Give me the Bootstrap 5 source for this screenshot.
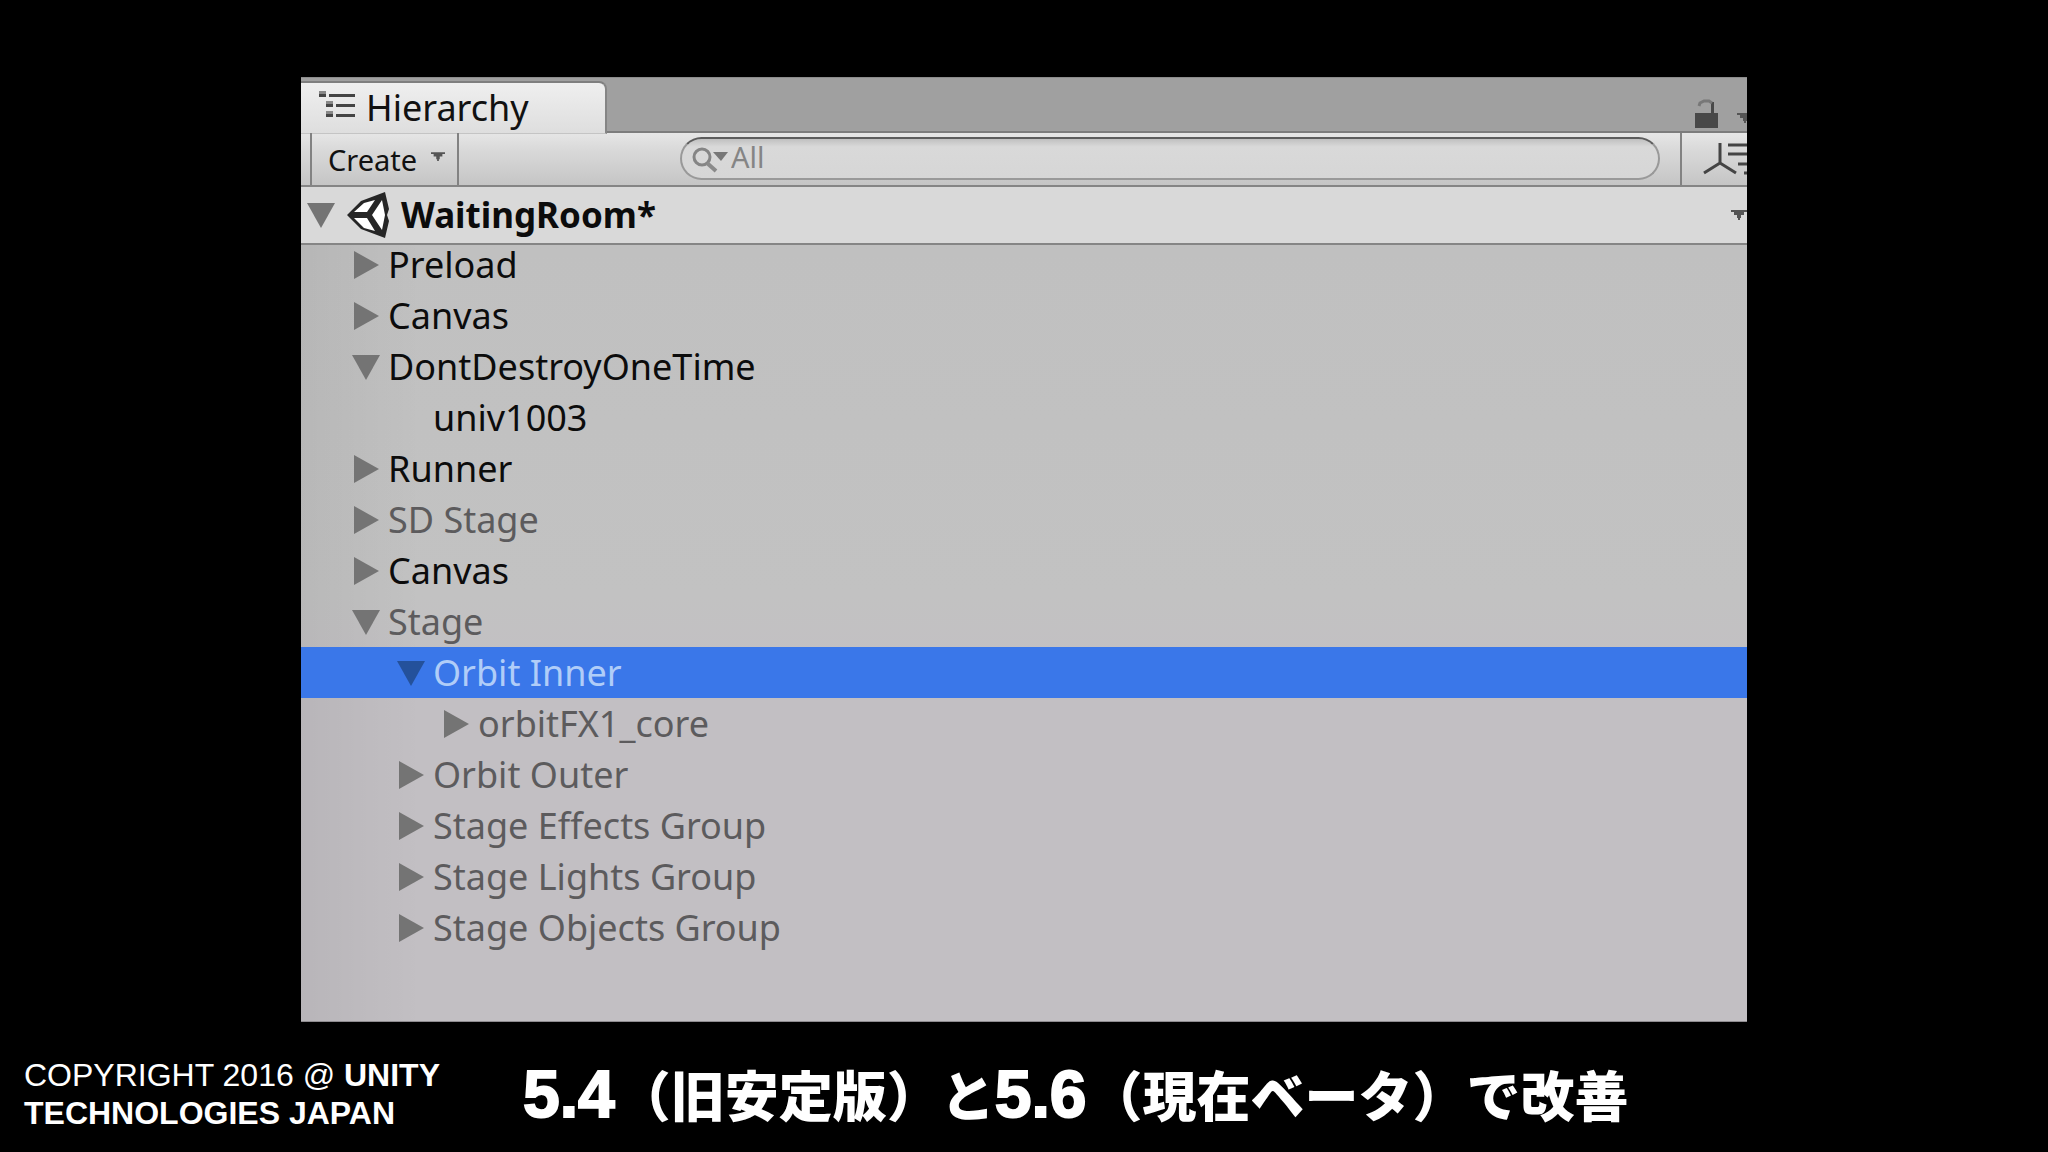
<!DOCTYPE html>
<html lang="ja">
<head>
<meta charset="utf-8">
<meta name="viewport" content="width=device-width, initial-scale=1">
<title>Hierarchy</title>
<link href="https://cdn.jsdelivr.net/npm/bootstrap@5.3.0/dist/css/bootstrap.min.css" rel="stylesheet">
<style>
  body { background: #000; font-family: "Noto Sans", "Open Sans", sans-serif; color: #0c0c0c; }
  .slide { padding: 77px 301px 0; }
  .hierarchy { height: 945px; background: linear-gradient(90deg, #0000000d, #0000 120px), linear-gradient(#bfbfbf 0, #c2c2c2 55%, #c2bfc3 65%, #c2bfc3 100%); border-bottom: 1px solid #8f8c90; }
  .tab-strip { height: 56px; padding-top: 4px; background: #a0a0a0; border-top: 1px solid #8c8c8c; border-bottom: 2px solid #7c7c7c; }
  .tab-title { width: 306px; height: 53px; margin-top: -1px; padding-left: 18px; gap: 11px; border-top: 2px solid #7f7f7f; border-right: 2px solid #858585; border-bottom: 1px solid #c4c4c4; border-top-right-radius: 8px; background: linear-gradient(#efefef, #dedede); font-size: 36px; line-height: 40px; color: #111; text-decoration: none; }
  .strip-tools { gap: 19px; padding-top: 15px; }
  .toolbar-row { height: 54px; background: linear-gradient(#e6e6e6, #dadada 30%, #c5c5c5); border-bottom: 2px solid #858585; }
  .create-btn { width: 149px; margin-left: 9px; padding: 2px 12px 0 16px; border: 0 solid #828282; border-width: 0 2px; background: none; font-size: 29px; line-height: 40px; color: #111; }
  .search-pill { height: 43px; margin: 4px 20px 0 221px; padding: 0 0 3px 10px; border: 2px solid #999; border-top-color: #5c5c5c; border-radius: 22px; background: linear-gradient(#c0c0c0, #d9d9d9 20%, #d6d6d6); }
  .search-pill input { width: 100%; padding: 0 3px; border: 0; outline: 0; background: none; font-size: 29px; line-height: 36px; color: #333; }
  .search-pill input::placeholder { color: #858585; opacity: 1; }
  .sort-btn { width: 67px; padding: 0 0 0 20px; border: 0; border-left: 2px solid #828282; background: none; }
  .scene-row { height: 58px; padding-left: 5px; background: #d9d9d9; border-bottom: 2px solid #858585; z-index: 1; font-size: 35px; line-height: 48px; }
  .tree { margin: -6px 0 0; }
  .tree-row { height: 51px; padding-left: 50px; font-size: 36px; line-height: 51px; gap: 7px; }
  .depth-1 { padding-left: 95px; }
  .depth-2 { padding-left: 140px; }
  .toggle-btn { width: 30px; height: 30px; padding: 0; border: 0; background: none; color: #747474; }
  .toggle-btn svg, .plain-btn svg { display: block; fill: currentColor; }
  .plain-btn { padding: 0; border: 0; background: none; color: #555; }
  .is-off { color: #5c5b5d; }
  .is-picked { background: #3a77e9; color: #b0cdf8; }
  .is-picked .toggle-btn { color: #24519b; }
  .slide-foot { padding: 34px 24px 0; gap: 82px; color: #fff; }
  .copyright { font-family: "Liberation Sans", sans-serif; font-size: 32px; line-height: 38px; width: 417px; }
  .caption-text { font-family: "Noto Sans CJK JP", sans-serif; font-size: 54px; line-height: 76px; font-weight: 900; }
  .caption-num { font-family: "Liberation Sans", sans-serif; font-size: 66px; line-height: 60px; margin-right: 2px; -webkit-text-stroke: 2px #fff; }
</style>
<script src="https://cdn.jsdelivr.net/npm/bootstrap@5.3.0/dist/js/bootstrap.bundle.min.js"></script>
</head>
<body class="min-vh-100 overflow-hidden">
<svg class="d-none">
  <symbol id="closed" viewBox="0 0 30 30"><path d="M3 1v28l25-14z"/></symbol>
  <symbol id="open" viewBox="0 0 30 30"><path d="M1 3h28L15 28z"/></symbol>
  <symbol id="caret" viewBox="0 0 16 10"><path d="M0 0h16v2h-3v3h-3v3H9v2H7V8H6V5H3V2H0z"/></symbol>
</svg>
<main class="slide">
  <section class="hierarchy overflow-hidden" aria-label="Hierarchy">
    <div class="tab-strip d-flex justify-content-between">
      <a class="tab-title d-flex align-items-center flex-shrink-0" href="#tree"><svg class="mb-2" width="36" height="28" viewBox="0 0 36 28"><path fill="#888" d="M0 1h7v5H0zM7 11h7v5H7zM7 21h7v5H7z"/><path fill="#444" d="M0 4h7v3H0zM7 14h7v3H7zM7 24h7v3H7zM10 4h26v3H10zM17 14h19v3H17zM17 24h19v3H17z"/></svg>Hierarchy</a>
      <div class="strip-tools d-flex overflow-hidden">
        <button class="plain-btn" aria-label="Lock"><svg width="23" height="30" viewBox="0 0 23 30"><path fill="#484848" d="M0 14h23v15H0zM16 3h3v11h-3z"/><path fill="none" stroke="#777" stroke-width="3" d="M4 7l1-3 4-2h5l3 2"/></svg></button>
        <button class="plain-btn overflow-hidden d-flex align-items-center" style="width:10px" aria-label="Menu"><svg class="flex-shrink-0 mt-2" width="16" height="10"><use href="#caret"/></svg></button>
      </div>
    </div>
    <div class="toolbar-row d-flex">
      <button class="create-btn d-flex align-items-center justify-content-between">Create <svg class="mb-2" width="14" height="9" fill="#555"><use href="#caret"/></svg></button>
      <label class="search-pill d-flex align-items-center flex-grow-1">
        <svg class="flex-shrink-0 mt-1" width="36" height="28" viewBox="0 0 36 28"><circle cx="10" cy="12" r="8" fill="none" stroke="#858585" stroke-width="3"/><path d="M15 18l9 8" stroke="#8a8a8a" stroke-width="4"/><path fill="#777" d="M21 7h15l-7 9z"/></svg>
        <input type="search" placeholder="All" aria-label="Search">
      </label>
      <button class="sort-btn overflow-hidden" aria-label="Sort"><svg class="d-block" width="56" height="34" viewBox="0 0 56 34" fill="none" stroke="#444" stroke-width="3"><path d="M18 1v21M18 21L2 31M18 21l16 10" /><path d="M26 3h30M26 12h30M36 22h20M42 31h14"/></svg></button>
    </div>
    <div class="scene-row d-flex align-items-center position-relative">
      <button class="toggle-btn" aria-label="Collapse"><svg width="30" height="30"><use href="#open"/></svg></button>
      <svg class="ms-2 me-2" width="49" height="48" viewBox="0 0 49 48"><path fill="#262626" d="M3 24L17 10 41 1l4 17-2 6 2 6-4 17-24-9z"/><path fill="#fff" d="M10 21l10-9 11-3-8 12zM10 27h13l8 13-11-3zM28 24l10-15 3 15-3 15z"/></svg>
      <strong class="me-auto">WaitingRoom*</strong>
      <button class="plain-btn me-0" aria-label="Scene menu"><svg width="16" height="10"><use href="#caret"/></svg></button>
    </div>
    <ul class="tree list-unstyled" id="tree">
      <li class="tree-row d-flex align-items-center"><button class="toggle-btn" aria-label="Expand"><svg width="30" height="30"><use href="#closed"/></svg></button>Preload</li>
      <li class="tree-row d-flex align-items-center"><button class="toggle-btn" aria-label="Expand"><svg width="30" height="30"><use href="#closed"/></svg></button>Canvas</li>
      <li class="tree-row d-flex align-items-center"><button class="toggle-btn" aria-label="Collapse"><svg width="30" height="30"><use href="#open"/></svg></button>DontDestroyOneTime</li>
      <li class="tree-row depth-1 d-flex align-items-center"><span class="toggle-btn"></span>univ1003</li>
      <li class="tree-row d-flex align-items-center"><button class="toggle-btn" aria-label="Expand"><svg width="30" height="30"><use href="#closed"/></svg></button>Runner</li>
      <li class="tree-row is-off d-flex align-items-center"><button class="toggle-btn" aria-label="Expand"><svg width="30" height="30"><use href="#closed"/></svg></button>SD Stage</li>
      <li class="tree-row d-flex align-items-center"><button class="toggle-btn" aria-label="Expand"><svg width="30" height="30"><use href="#closed"/></svg></button>Canvas</li>
      <li class="tree-row is-off d-flex align-items-center"><button class="toggle-btn" aria-label="Collapse"><svg width="30" height="30"><use href="#open"/></svg></button>Stage</li>
      <li class="tree-row depth-1 is-picked d-flex align-items-center"><button class="toggle-btn" aria-label="Collapse"><svg width="30" height="30"><use href="#open"/></svg></button>Orbit Inner</li>
      <li class="tree-row depth-2 is-off d-flex align-items-center"><button class="toggle-btn" aria-label="Expand"><svg width="30" height="30"><use href="#closed"/></svg></button>orbitFX1_core</li>
      <li class="tree-row depth-1 is-off d-flex align-items-center"><button class="toggle-btn" aria-label="Expand"><svg width="30" height="30"><use href="#closed"/></svg></button>Orbit Outer</li>
      <li class="tree-row depth-1 is-off d-flex align-items-center"><button class="toggle-btn" aria-label="Expand"><svg width="30" height="30"><use href="#closed"/></svg></button>Stage Effects Group</li>
      <li class="tree-row depth-1 is-off d-flex align-items-center"><button class="toggle-btn" aria-label="Expand"><svg width="30" height="30"><use href="#closed"/></svg></button>Stage Lights Group</li>
      <li class="tree-row depth-1 is-off d-flex align-items-center"><button class="toggle-btn" aria-label="Expand"><svg width="30" height="30"><use href="#closed"/></svg></button>Stage Objects Group</li>
    </ul>
  </section>
</main>
<footer class="slide-foot d-flex">
  <div class="copyright flex-shrink-0">COPYRIGHT 2016 @ <strong>UNITY<br>TECHNOLOGIES JAPAN</strong></div>
  <div class="caption-text text-nowrap"><span class="caption-num">5.4</span>（旧安定版）と<span class="caption-num">5.6</span>（現在ベータ）で改善</div>
</footer>
</body>
</html>
